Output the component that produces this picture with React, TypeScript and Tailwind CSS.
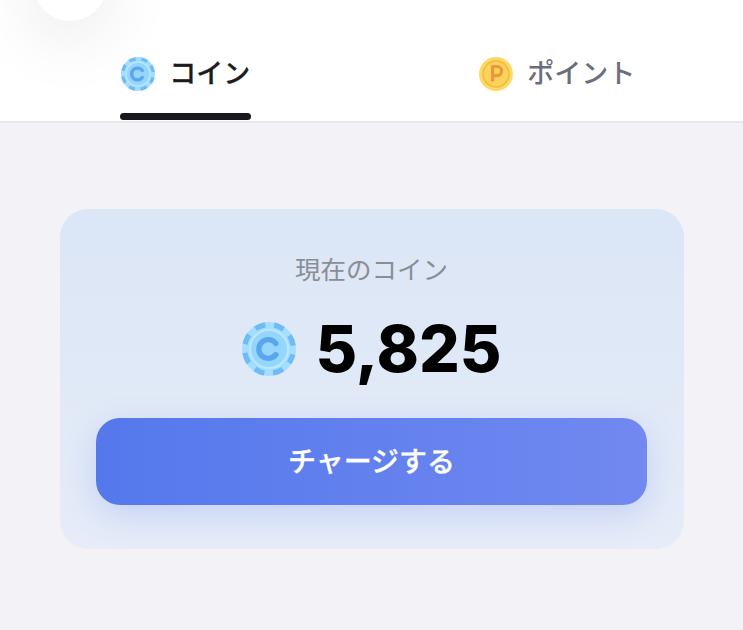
import React from 'react';

const JP = '[font-family:Inter,"Noto_Sans_CJK_JP",sans-serif]';

const CoinIcon: React.FC<{ className?: string }> = ({ className }) => (
  <svg viewBox="0 0 54 54" className={className}>
    <circle cx="27" cy="27" r="27" fill="#a3deff" />
    <circle
      cx="27"
      cy="27"
      r="24.4"
      fill="none"
      stroke="#6fbbf6"
      strokeWidth="5.2"
      strokeDasharray="10.5 8.66"
      strokeDashoffset="5.25"
      transform="rotate(22.5 27 27)"
    />
    <circle cx="27" cy="27" r="19" fill="#94d6fe" stroke="#bce8ff" strokeWidth="2" />
    <path d="M33.8 21.4a9.4 9.4 0 1 0 0 11.2" fill="none" stroke="#5aa6ee" strokeWidth="5.4" strokeLinecap="round" />
  </svg>
);

const PointIcon: React.FC<{ className?: string }> = ({ className }) => (
  <svg viewBox="0 0 34 34" className={className}>
    <circle cx="17" cy="17" r="17" fill="#fcd865" />
    <circle cx="17" cy="17" r="13" fill="#fbd35a" stroke="#f4b93c" strokeWidth="1.4" />
    <path d="M13.6 24.5v-15h4.4a4.6 4.6 0 0 1 0 9.2h-4.4" fill="none" stroke="#ee973a" strokeWidth="3.2" strokeLinejoin="round" />
  </svg>
);

export default function App() {
  return (
    <div className={`relative h-[630px] w-[743px] overflow-hidden bg-[#f2f2f7] ${JP}`}>
      <div className="relative grid h-[123px] grid-cols-2 border-b-2 border-[#e8e8ed] bg-white">
        <div className="absolute -top-[54px] left-[32px] h-[76px] w-[76px] rounded-full border border-[#f5f5f5] bg-white shadow-[0_14px_70px_rgba(0,0,0,0.1)]" />
        <div className="relative flex justify-center">
          <div className="flex h-[120px] w-[131px] flex-col items-center justify-end">
            <div className="flex items-center gap-[14px] pb-[22px]">
              <CoinIcon className="h-[34px] w-[34px]" />
              <span className="text-[27px] leading-[34px] font-medium text-[#1c1c1e] [-webkit-text-stroke:0.3px_#1c1c1e]">コイン</span>
            </div>
            <div className="h-[7px] w-full rounded-full bg-[#16181d]" />
          </div>
        </div>
        <div className="flex justify-center">
          <div className="flex h-[121px] items-end pb-[30px]">
            <div className="flex items-center gap-[14px]">
              <PointIcon className="h-[34px] w-[34px]" />
              <span className="text-[27px] leading-[34px] font-medium text-[#6b6e7b]">ポイント</span>
            </div>
          </div>
        </div>
      </div>

      <div className="pt-[86px] pr-[59px] pl-[60px]">
        <div className="flex h-[340px] flex-col items-center rounded-[28px] bg-gradient-to-b from-[#dbe6f6] to-[#e6ecf8] pt-[42px] pr-[37px] pl-[36px]">
          <p className="text-[25.5px] leading-[38px] text-[#8a8d94]">現在のコイン</p>
          <div className="mt-[24px] flex items-center gap-[20px]">
            <CoinIcon className="h-[54px] w-[54px]" />
            <span className="text-[64px] leading-[72px] font-extrabold text-black">5,825</span>
          </div>
          <button className="mt-[33px] flex h-[87px] w-full items-center justify-center rounded-[24px] bg-gradient-to-r from-[#5478ec] to-[#7189f0] text-[28px] font-medium text-white shadow-[0_10px_32px_rgba(82,118,236,0.22)] [-webkit-text-stroke:0.3px_white]">
            チャージする
          </button>
        </div>
      </div>
    </div>
  );
}
